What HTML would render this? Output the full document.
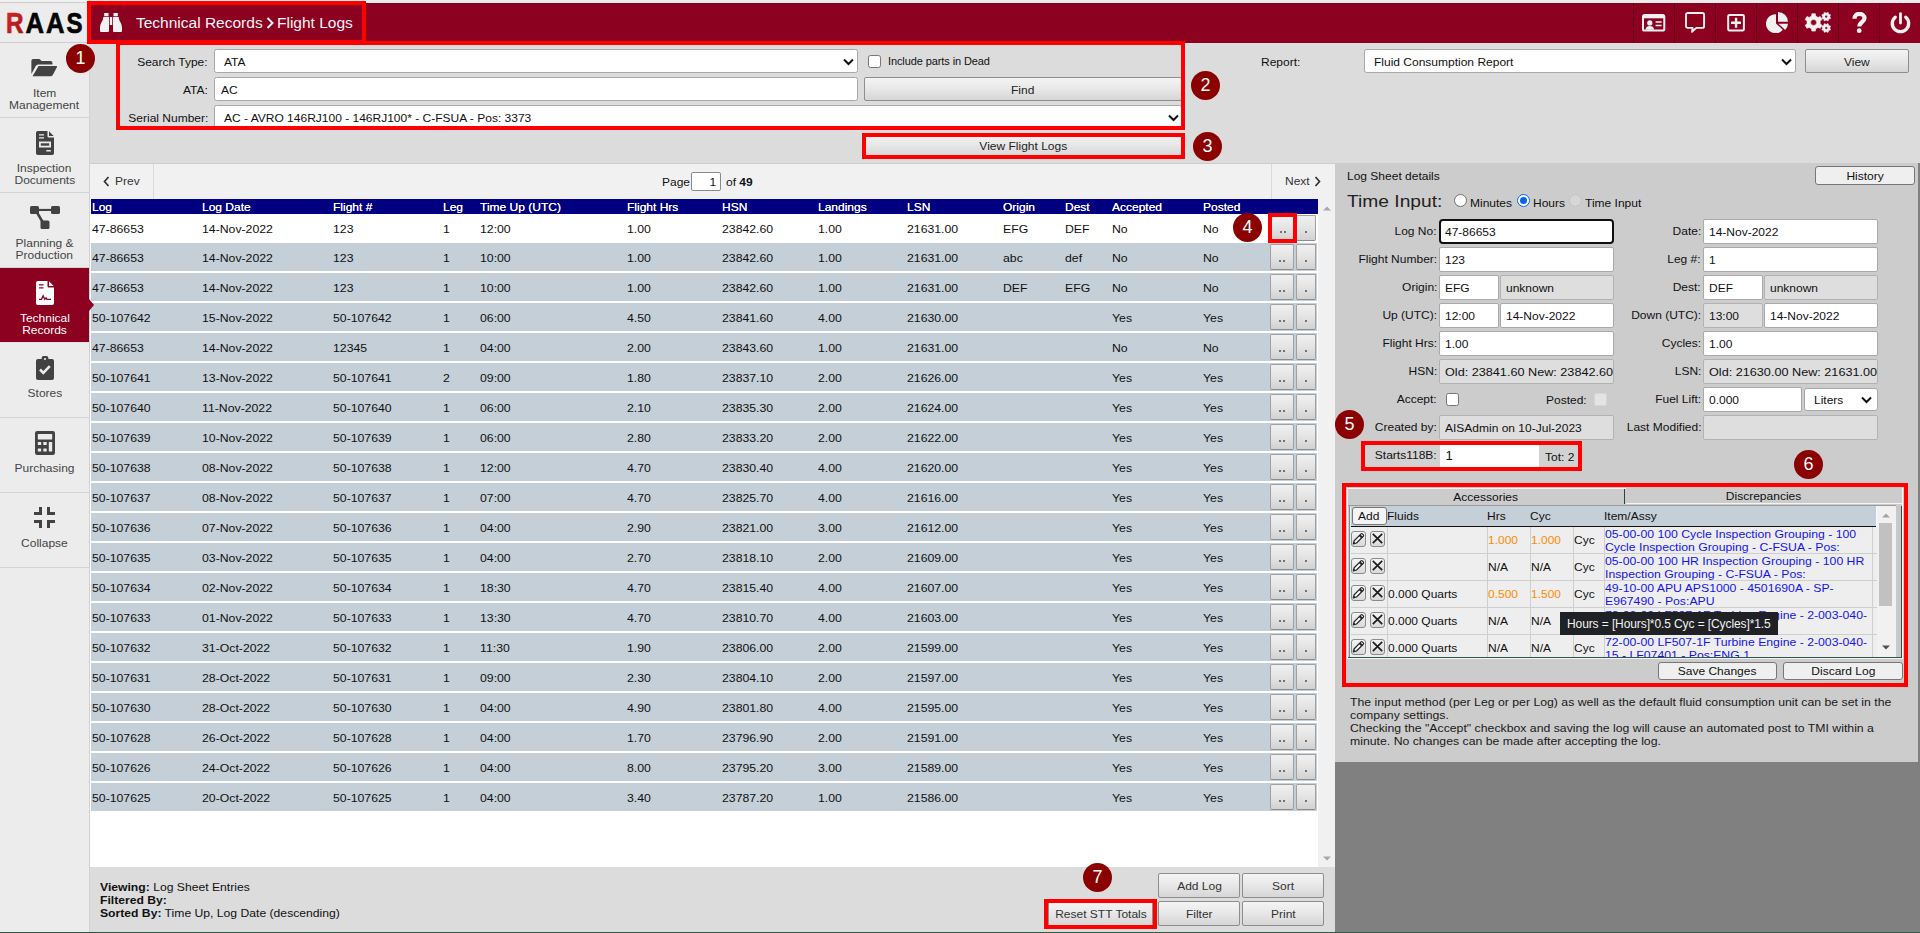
<!DOCTYPE html><html><head><meta charset="utf-8"><title>RAAS - Flight Logs</title><style>
*{box-sizing:border-box;margin:0;padding:0}
html,body{width:1920px;height:933px;overflow:hidden}
body{position:relative;background:#dcdcdc;font-family:"Liberation Sans",sans-serif;font-size:11px;color:#111;line-height:14px}
.sx{display:inline-block;transform:scaleX(1.0909);transform-origin:0 50%;white-space:nowrap}
.sx.sr{transform-origin:100% 50%}
.sx.sc{transform-origin:50% 50%}
.a{position:absolute}
.t{position:absolute;white-space:nowrap}
.r{text-align:right}
.c{text-align:center}
#side{left:0;top:0;width:90px;height:932px;background:#ececec;border-right:1px solid #d2d2d2}
.si{position:absolute;left:0;width:89px;height:75px;border-bottom:1px solid #d4d4d4;color:#454545;text-align:center;line-height:12px}
.si .lb{position:absolute;left:0;width:89px;text-align:center}
.si.act{background:#8c0020;color:#fff;border-bottom-color:#e2e2e2}
#hdr{left:90px;top:3px;width:1830px;height:40px;background:#8c0020}
.hsep{position:absolute;top:0;width:1px;height:40px;background:#64001a}
.redbox{position:absolute;border:4px solid #fe0000}
.circ{position:absolute;width:29px;height:29px;border-radius:50%;background:#8b0000;color:#fff;text-align:center;font-size:18px;line-height:29px}
.sel,.inp{position:absolute;background:#fff;border:1px solid #a8a8a8;border-radius:2.500px;height:24px;line-height:25.500px;padding-left:9px;white-space:nowrap;overflow:hidden}
.gbtn{position:absolute;border:1px solid #8e8e8e;border-radius:2px;background:linear-gradient(#f4f4f4,#e9e9e9 45%,#d6d6d6);text-align:center;color:#222;white-space:nowrap}
.row{position:absolute;left:91px;width:1226px;height:28px;background:#c4cfd8;line-height:28px}
.row>span{position:absolute;top:0.500px;white-space:nowrap}
.rb{position:absolute;top:1px;height:26px;border:1px solid #a0a0a0;border-bottom-color:#8c8c8c;border-radius:2px;background:linear-gradient(#f0f0f0,#e4e4e4 50%,#d2d2d2);}
.rb i{position:absolute;width:2px;height:2px;background:#727272;top:15px}
.fi{position:absolute;height:25px;background:#fff;border:1px solid #a9a9a9;border-radius:2px;line-height:25.500px;padding-left:5px;white-space:nowrap;overflow:hidden}
.fi.d{background:#dedede;border-color:#b2b2b2}
.fl{position:absolute;text-align:right;white-space:nowrap;line-height:24px;height:24px}
.pb{position:absolute;border:1px solid #767676;border-radius:3px;background:#efefef;text-align:center;white-space:nowrap}
.gr{position:absolute;left:1351px;width:526px;height:27px;background:#eeeeee;border-bottom:1px solid #cfcfcf}
.gr .vb{position:absolute;top:0;width:1px;height:27px;background:#cfcfcf}
.gr>span{position:absolute;white-space:nowrap}
.lnk{color:#1414ee;line-height:13px}
.ib{position:absolute;width:15px;height:15.500px;border:1px solid #8a8a8a;border-radius:3px;background:linear-gradient(#f4f4f4,#d9d9d9)}
</style></head><body>
<div class="a" style="left:0;top:0;width:1920px;height:3px;background:#ededed"></div>
<div id="side" class="a">
<div class="a" style="left:0;top:42px;width:89px;height:1px;background:#cfcfcf"></div>
<svg class="a" style="left:0;top:3px" width="89" height="39" viewBox="0 0 89 39"><defs><linearGradient id="rg" x1="0" y1="0" x2="1" y2="1"><stop offset="0" stop-color="#e02828"/><stop offset="1" stop-color="#9a1414"/></linearGradient></defs><g font-family="Liberation Sans" font-weight="bold" font-size="30" stroke-width="0.7"><text x="6" y="30" fill="url(#rg)" stroke="url(#rg)" textLength="17.5" lengthAdjust="spacingAndGlyphs">R</text><text x="25.5" y="30" fill="#050505" stroke="#050505" textLength="18.5" lengthAdjust="spacingAndGlyphs">A</text><text x="46" y="30" fill="#050505" stroke="#050505" textLength="18.5" lengthAdjust="spacingAndGlyphs">A</text><text x="66.5" y="30" fill="#050505" stroke="#050505" textLength="16" lengthAdjust="spacingAndGlyphs">S</text></g></svg>
<div class="si" style="top:43px"><svg class="a" style="left:31px;top:16px" width="26" height="17.500" viewBox="0 0 27 19" preserveAspectRatio="none"><path fill="#424242" d="M2.2 0h6.6l2.2 2.3h9.3a2 2 0 0 1 2 2V6H7.6a3 3 0 0 0-2.7 1.700L0.400 16.200V2a2 2 0 0 1 1.800-2z"/><path fill="#424242" d="M7.900 7.600h18.200a.9.9 0 0 1 .8 1.300l-4.300 8.600a2 2 0 0 1-1.800 1.100H1.600z"/></svg>
<div class="lb" style="top:43.500px"><span class="sx sc">Item</span></div><div class="lb" style="top:55.500px"><span class="sx sc">Management</span></div>
</div>
<div class="si" style="top:118px"><svg class="a" style="left:35.500px;top:13px" width="18" height="24" viewBox="0 0 18 24"><path fill="#424242" d="M1.800 0h9.700v5.200a1.300 1.300 0 0 0 1.300 1.300H18v15.700A1.800 1.800 0 0 1 16.200 24H1.800A1.800 1.800 0 0 1 0 22.200V1.800A1.800 1.800 0 0 1 1.800 0z M13 0.300 17.700 5H13z"/><path fill="#ececec" d="M3 3.300h5v1.300H3z M3 6.300h5v1.300H3z M3 10.500h12v6H3z M10.300 19h4.500v1.500h-4.500z"/><path fill="#424242" d="M4.800 12.300h8.400v2.400H4.800z"/></svg>
<div class="lb" style="top:43.500px"><span class="sx sc">Inspection</span></div><div class="lb" style="top:55.500px"><span class="sx sc">Documents</span></div>
</div>
<div class="si" style="top:193px"><svg class="a" style="left:30px;top:12px" width="30" height="25" viewBox="0 0 30 25"><g fill="#424242"><rect x="0" y="1" width="9" height="8" rx="1.600"/><rect x="21" y="1" width="9" height="8" rx="1.600"/><rect x="10.500" y="15.500" width="9" height="8.500" rx="1.600"/><rect x="8" y="3.900" width="14" height="2.100"/><path d="M6 8.200 8.300 7l5.200 9-2.300 1.300z"/></g></svg>
<div class="lb" style="top:43.500px"><span class="sx sc">Planning &amp;</span></div><div class="lb" style="top:55.500px"><span class="sx sc">Production</span></div>
</div>
<div class="si act" style="top:268px"><svg class="a" style="left:35.500px;top:13px" width="18" height="24" viewBox="0 0 18 24"><path fill="#fff" d="M1.800 0h9.700v5.200a1.300 1.300 0 0 0 1.300 1.300H18v15.700A1.800 1.800 0 0 1 16.200 24H1.800A1.800 1.800 0 0 1 0 22.200V1.800A1.800 1.800 0 0 1 1.800 0z M13 0.300 17.700 5H13z"/><path fill="#8c0020" d="M3 3.300h4.500v1.300H3z M3 6.300h4.500v1.300H3z"/><path fill="none" stroke="#8c0020" stroke-width="1.300" d="M3 18.300h2.500l1.600-3.500 1.700 3.500 1.200-1.500 1 1.500h4"/></svg>
<div class="lb" style="top:43.500px"><span class="sx sc">Technical</span></div><div class="lb" style="top:55.500px"><span class="sx sc">Records</span></div>
</div>
<div class="si" style="top:343px"><svg class="a" style="left:35.500px;top:13px" width="18" height="24" viewBox="0 0 18 24"><path fill="#424242" d="M2 3h3.500a3.500 3.500 0 0 1 7 0H16a2 2 0 0 1 2 2v17a2 2 0 0 1-2 2H2a2 2 0 0 1-2-2V5a2 2 0 0 1 2-2z"/><circle cx="9" cy="3" r="1.100" fill="#ececec"/><path fill="none" stroke="#ececec" stroke-width="2.600" d="M4 13.500l3.300 3.300 6.500-6.600"/></svg>
<div class="lb" style="top:43.500px"><span class="sx sc">Stores</span></div>
</div>
<div class="si" style="top:418px"><svg class="a" style="left:34.500px;top:13px" width="20" height="24" viewBox="0 0 20 24"><rect x="0" y="0" width="20" height="24" rx="2.200" fill="#424242"/><g fill="#ececec"><rect x="2.800" y="3" width="14.400" height="5.500" rx=".6"/><rect x="2.800" y="11" width="3.400" height="3" rx=".5"/><rect x="8.300" y="11" width="3.400" height="3" rx=".5"/><rect x="13.800" y="11" width="3.400" height="9.500" rx=".5"/><rect x="2.800" y="17.500" width="3.400" height="3" rx=".5"/><rect x="8.300" y="17.500" width="3.400" height="3" rx=".5"/></g></svg>
<div class="lb" style="top:43.500px"><span class="sx sc">Purchasing</span></div>
</div>
<div class="si" style="top:493px"><svg class="a" style="left:34px;top:14px" width="21" height="21" viewBox="0 0 21 21"><g fill="none" stroke="#424242" stroke-width="3"><path d="M0 6.500h6.500V0"/><path d="M21 6.500h-6.500V0"/><path d="M0 14.500h6.500v6.500"/><path d="M21 14.500h-6.500v6.500"/></g></svg>
<div class="lb" style="top:43.500px"><span class="sx sc">Collapse</span></div>
</div>
</div>
<div class="a" style="left:0;top:0;width:89px;height:2px;background:#f1f1f1"></div><div class="a" style="left:0;top:2px;width:87px;height:1px;background:#cbcbcb"></div>
<div id="hdr" class="a">
<svg class="a" style="left:10px;top:10px" width="22" height="19" viewBox="0 0 22 19"><path fill="#f2f2f2" d="M4.200 0h4.300v3.200H4.200z M13.500 0h4.300v3.200h-4.300z M3.300 4h5.700v14a1 1 0 0 1-1 1H1a1 1 0 0 1-1-1v-3.500C0 10 3.300 8 3.300 4z M13 4h5.700c0 4 3.300 6 3.300 10.500V18a1 1 0 0 1-1 1h-7a1 1 0 0 1-1-1z M9.800 4h2.400v8H9.800z"/></svg>
<div class="t" style="left:46px;top:11px;font-size:15.500px;line-height:18px;color:#f4f4f4">Technical Records</div>
<svg class="a" style="left:176px;top:14px" width="8" height="12" viewBox="0 0 8 12"><path d="M1.500 1l5 5-5 5" fill="none" stroke="#f4f4f4" stroke-width="2"/></svg>
<div class="t" style="left:187px;top:11px;font-size:15.500px;line-height:18px;color:#f4f4f4">Flight Logs</div>
<div class="hsep" style="left:1543px"></div>
<div class="hsep" style="left:1584px"></div>
<div class="hsep" style="left:1625px"></div>
<div class="hsep" style="left:1666px"></div>
<div class="hsep" style="left:1707px"></div>
<div class="hsep" style="left:1748px"></div>
<div class="hsep" style="left:1789px"></div>
<svg class="a" style="left:1552.4px;top:10.700px" width="24" height="18" viewBox="0 0 24 18"><rect x="1" y="1" width="21.300" height="15.500" rx="1.600" fill="none" stroke="#f1f1f1" stroke-width="2"/><rect x="1" y="1" width="21.300" height="3.300" fill="#f1f1f1"/><circle cx="7.800" cy="8.900" r="2.600" fill="#f1f1f1"/><path d="M3.600 15.800c0-2.800 1.800-3.800 4.200-3.800s4.200 1 4.200 3.800z" fill="#f1f1f1"/><path d="M13.600 8h6M13.600 11.500h6" stroke="#f1f1f1" stroke-width="1.500"/></svg>
<svg class="a" style="left:1595px;top:9px" width="21" height="21" viewBox="0 0 21 21"><path d="M2.700 1h14.700a1.700 1.700 0 0 1 1.700 1.700v11.500a1.700 1.700 0 0 1-1.700 1.700H11.300l-4.300 3.900 .6-3.900H2.700a1.700 1.700 0 0 1-1.700-1.700V2.700a1.700 1.700 0 0 1 1.700-1.700z" fill="none" stroke="#f1f1f1" stroke-width="1.900" stroke-linejoin="round"/></svg>
<svg class="a" style="left:1637px;top:10.700px" width="19" height="18" viewBox="0 0 19 18"><rect x="1.200" y="1" width="15.700" height="15.500" rx="1.300" fill="none" stroke="#f1f1f1" stroke-width="2"/><path d="M9.050 3.800v10M4 8.800h10" stroke="#f1f1f1" stroke-width="2.400"/></svg>
<svg class="a" style="left:1676px;top:9px" width="23" height="21" viewBox="0 0 23 21"><path d="M10 2.300v9.200l6.800 6.300A9.500 9.500 0 1 1 10 2.300z" fill="#f1f1f1"/><path d="M12 0a10 10 0 0 1 10 9.800H12z" fill="#f1f1f1"/><path d="M12.500 11.800H22a9.500 9.500 0 0 1-2.800 6.200z" fill="#f1f1f1"/></svg>
<svg class="a" style="left:1714px;top:9px" width="28" height="22" viewBox="0 0 28 22"><path fill="#f1f1f1" fill-rule="evenodd" stroke="#f1f1f1" stroke-width="0.6" stroke-linejoin="round" d="M16.15 11.79 L18.04 13.24 L16.28 16.29 L14.08 15.38 L11.67 16.77 L11.36 19.12 L7.84 19.12 L7.53 16.77 L5.12 15.38 L2.92 16.29 L1.16 13.24 L3.05 11.79 L3.05 9.01 L1.16 7.56 L2.92 4.51 L5.12 5.42 L7.53 4.03 L7.84 1.68 L11.36 1.68 L11.67 4.03 L14.08 5.42 L16.28 4.51 L18.04 7.56 L16.15 9.01z M6.60 10.40 a3.00 3.00 0 1 0 6.00 0 a3.00 3.00 0 1 0 -6.00 0z"/><path fill="#f1f1f1" fill-rule="evenodd" stroke="#f1f1f1" stroke-width="0.4" stroke-linejoin="round" d="M25.90 5.19 L26.66 5.71 L26.14 6.97 L25.23 6.80 L24.40 7.63 L24.57 8.54 L23.31 9.06 L22.79 8.30 L21.61 8.30 L21.09 9.06 L19.83 8.54 L20.00 7.63 L19.17 6.80 L18.26 6.97 L17.74 5.71 L18.50 5.19 L18.50 4.01 L17.74 3.49 L18.26 2.23 L19.17 2.40 L20.00 1.57 L19.83 0.66 L21.09 0.14 L21.61 0.90 L22.79 0.90 L23.31 0.14 L24.57 0.66 L24.40 1.57 L25.23 2.40 L26.14 2.23 L26.66 3.49 L25.90 4.01z M20.90 4.60 a1.30 1.30 0 1 0 2.60 0 a1.30 1.30 0 1 0 -2.60 0z"/><path fill="#f1f1f1" fill-rule="evenodd" stroke="#f1f1f1" stroke-width="0.4" stroke-linejoin="round" d="M25.90 16.59 L26.66 17.11 L26.14 18.37 L25.23 18.20 L24.40 19.03 L24.57 19.94 L23.31 20.46 L22.79 19.70 L21.61 19.70 L21.09 20.46 L19.83 19.94 L20.00 19.03 L19.17 18.20 L18.26 18.37 L17.74 17.11 L18.50 16.59 L18.50 15.41 L17.74 14.89 L18.26 13.63 L19.17 13.80 L20.00 12.97 L19.83 12.06 L21.09 11.54 L21.61 12.30 L22.79 12.30 L23.31 11.54 L24.57 12.06 L24.40 12.97 L25.23 13.80 L26.14 13.63 L26.66 14.89 L25.90 15.41z M20.90 16.00 a1.30 1.30 0 1 0 2.60 0 a1.30 1.30 0 1 0 -2.60 0z"/></svg>
<svg class="a" style="left:1761px;top:9px" width="17" height="22" viewBox="0 0 17 22"><path d="M3.500 6.800C3.500 3.200 5.800 1.900 8.300 1.900C11.200 1.900 13.500 3.600 13.500 6.300C13.500 9.800 8.300 9.900 8.300 14.600" fill="none" stroke="#f1f1f1" stroke-width="4.200"/><circle cx="8.200" cy="18.700" r="2.400" fill="#f1f1f1"/></svg>
<svg class="a" style="left:1800px;top:9px" width="21" height="22" viewBox="0 0 21 22"><path d="M5.200 5.200A8.200 8.200 0 1 0 15.800 5.200" fill="none" stroke="#f1f1f1" stroke-width="3.400" stroke-linecap="round"/><path d="M10.500 1.700v9.300" stroke="#f1f1f1" stroke-width="2.800" stroke-linecap="round"/></svg>
</div>
<div class="t r" style="left:100px;top:55px;width:108px"><span class="sx sr">Search Type:</span></div>
<div class="t r" style="left:100px;top:83px;width:108px"><span class="sx sr">ATA:</span></div>
<div class="t r" style="left:100px;top:111px;width:108px"><span class="sx sr">Serial Number:</span></div>
<div class="sel" style="left:214px;top:49px;width:644px"><span class="sx">ATA</span></div><svg class="a" style="left:843px;top:58px" width="11" height="8" viewBox="0 0 11 8"><path d="M1 1.500l4.500 4.500L10 1.500" fill="none" stroke="#111" stroke-width="2"/></svg>
<div class="inp" style="left:214px;top:77px;width:644px;padding-left:6px"><span class="sx">AC</span></div>
<div class="sel" style="left:214px;top:105px;width:968px"><span class="sx">AC - AVRO 146RJ100 - 146RJ100* - C-FSUA - Pos: 3373</span></div><svg class="a" style="left:1168px;top:114px" width="11" height="8" viewBox="0 0 11 8"><path d="M1 1.500l4.500 4.500L10 1.500" fill="none" stroke="#111" stroke-width="2"/></svg>
<div class="a" style="left:868px;top:55px;width:13px;height:13px;background:#fff;border:1px solid #767676;border-radius:2.500px"></div>
<div class="t" style="left:888px;top:54px;font-size:11px;letter-spacing:-0.100px">Include parts in Dead</div>
<div class="gbtn" style="left:864px;top:77px;width:318px;height:24px;line-height:24px"><span class="sx sc">Find</span></div>
<div class="gbtn" style="left:864px;top:133px;width:318px;height:24px;line-height:24px"><span class="sx sc">View Flight Logs</span></div>
<div class="t" style="left:1261px;top:55px"><span class="sx">Report:</span></div>
<div class="sel" style="left:1364px;top:49px;width:432px"><span class="sx">Fluid Consumption Report</span></div><svg class="a" style="left:1781px;top:58px" width="11" height="8" viewBox="0 0 11 8"><path d="M1 1.500l4.500 4.500L10 1.500" fill="none" stroke="#111" stroke-width="2"/></svg>
<div class="gbtn" style="left:1805px;top:49px;width:104px;height:24px;line-height:24px"><span class="sx sc">View</span></div>
<div class="a" style="left:90px;top:163px;width:1245px;height:36px;background:#f1f1f1;border-top:1px solid #cdcdcd"></div>
<div class="a" style="left:153px;top:164px;width:1px;height:35px;background:#dadada"></div>
<div class="a" style="left:1271px;top:164px;width:1px;height:35px;background:#dadada"></div>
<svg class="a" style="left:103px;top:176px" width="7" height="11" viewBox="0 0 7 11"><path d="M5.500 1L1.500 5.500 5.500 10" fill="none" stroke="#333" stroke-width="1.700"/></svg>
<div class="t" style="left:115px;top:173.500px;color:#333"><span class="sx">Prev</span></div>
<div class="t" style="left:1285px;top:173.500px;color:#333"><span class="sx">Next</span></div>
<svg class="a" style="left:1314px;top:176px" width="7" height="11" viewBox="0 0 7 11"><path d="M1.500 1L5.500 5.500 1.500 10" fill="none" stroke="#333" stroke-width="1.700"/></svg>
<div class="t" style="left:662px;top:174.500px"><span class="sx">Page</span></div>
<div class="a r" style="left:691px;top:172px;width:30px;height:19px;background:#fff;border:1px solid #8a8a8a;border-radius:2px;line-height:19.500px;padding-right:3.500px"><span class="sx sr">1</span></div>
<div class="t" style="left:726px;top:174.500px"><span class="sx">of <b>49</b></span></div>
<div class="a" style="left:90px;top:199px;width:1228px;height:668px;background:#fff"></div>
<div class="a" style="left:1318px;top:199px;width:17px;height:668px;background:#f1f1f1"></div>
<svg class="a" style="left:1322.500px;top:205.500px" width="8" height="5" viewBox="0 0 8 5"><path d="M0 4.500L4 0.500 8 4.500z" fill="#a8a8a8"/></svg>
<svg class="a" style="left:1322.500px;top:855.500px" width="8" height="5" viewBox="0 0 8 5"><path d="M0 0.500L4 4.500 8 0.500z" fill="#a8a8a8"/></svg>
<div class="a" style="left:91px;top:199px;width:1227px;height:15px;background:#000080;color:#fff;line-height:15px">
<span class="t" style="left:0.5px;top:0.500px;text-shadow:0 0 0.400px #fff"><span class="sx">Log</span></span>
<span class="t" style="left:111.0px;top:0.500px;text-shadow:0 0 0.400px #fff"><span class="sx">Log Date</span></span>
<span class="t" style="left:242.3px;top:0.500px;text-shadow:0 0 0.400px #fff"><span class="sx">Flight #</span></span>
<span class="t" style="left:351.5px;top:0.500px;text-shadow:0 0 0.400px #fff"><span class="sx">Leg</span></span>
<span class="t" style="left:389.3px;top:0.500px;text-shadow:0 0 0.400px #fff"><span class="sx">Time Up (UTC)</span></span>
<span class="t" style="left:535.5px;top:0.500px;text-shadow:0 0 0.400px #fff"><span class="sx">Flight Hrs</span></span>
<span class="t" style="left:631.0px;top:0.500px;text-shadow:0 0 0.400px #fff"><span class="sx">HSN</span></span>
<span class="t" style="left:727.3px;top:0.500px;text-shadow:0 0 0.400px #fff"><span class="sx">Landings</span></span>
<span class="t" style="left:816.0px;top:0.500px;text-shadow:0 0 0.400px #fff"><span class="sx">LSN</span></span>
<span class="t" style="left:912.3px;top:0.500px;text-shadow:0 0 0.400px #fff"><span class="sx">Origin</span></span>
<span class="t" style="left:973.5px;top:0.500px;text-shadow:0 0 0.400px #fff"><span class="sx">Dest</span></span>
<span class="t" style="left:1021.0px;top:0.500px;text-shadow:0 0 0.400px #fff"><span class="sx">Accepted</span></span>
<span class="t" style="left:1111.8px;top:0.500px;text-shadow:0 0 0.400px #fff"><span class="sx">Posted</span></span>
</div>
<div class="row" style="top:214px;background:#fff;height:29px">
<span style="left:0.5px"><span class="sx" style="transform:scaleX(1.115)">47-86653</span></span>
<span style="left:111.0px"><span class="sx" style="transform:scaleX(1.115)">14-Nov-2022</span></span>
<span style="left:242.3px"><span class="sx" style="transform:scaleX(1.115)">123</span></span>
<span style="left:351.5px"><span class="sx" style="transform:scaleX(1.115)">1</span></span>
<span style="left:389.3px"><span class="sx" style="transform:scaleX(1.115)">12:00</span></span>
<span style="left:535.5px"><span class="sx" style="transform:scaleX(1.115)">1.00</span></span>
<span style="left:631.0px"><span class="sx" style="transform:scaleX(1.115)">23842.60</span></span>
<span style="left:727.3px"><span class="sx" style="transform:scaleX(1.115)">1.00</span></span>
<span style="left:816.0px"><span class="sx" style="transform:scaleX(1.115)">21631.00</span></span>
<span style="left:912.3px"><span class="sx" style="transform:scaleX(1.115)">EFG</span></span>
<span style="left:973.5px"><span class="sx" style="transform:scaleX(1.115)">DEF</span></span>
<span style="left:1021.0px"><span class="sx" style="transform:scaleX(1.115)">No</span></span>
<span style="left:1111.8px"><span class="sx" style="transform:scaleX(1.115)">No</span></span>
<div class="rb" style="left:1180px;top:2px;width:23px;height:24px;border-radius:0"><i style="left:8px;top:14px"></i><i style="left:12px;top:14px"></i></div>
<div class="rb" style="left:1205px;top:1px;width:20px;height:25.500px"><i style="left:8px;top:15px"></i></div>
</div>
<div class="row" style="top:243px;">
<span style="left:0.5px"><span class="sx" style="transform:scaleX(1.115)">47-86653</span></span>
<span style="left:111.0px"><span class="sx" style="transform:scaleX(1.115)">14-Nov-2022</span></span>
<span style="left:242.3px"><span class="sx" style="transform:scaleX(1.115)">123</span></span>
<span style="left:351.5px"><span class="sx" style="transform:scaleX(1.115)">1</span></span>
<span style="left:389.3px"><span class="sx" style="transform:scaleX(1.115)">10:00</span></span>
<span style="left:535.5px"><span class="sx" style="transform:scaleX(1.115)">1.00</span></span>
<span style="left:631.0px"><span class="sx" style="transform:scaleX(1.115)">23842.60</span></span>
<span style="left:727.3px"><span class="sx" style="transform:scaleX(1.115)">1.00</span></span>
<span style="left:816.0px"><span class="sx" style="transform:scaleX(1.115)">21631.00</span></span>
<span style="left:912.3px"><span class="sx" style="transform:scaleX(1.115)">abc</span></span>
<span style="left:973.5px"><span class="sx" style="transform:scaleX(1.115)">def</span></span>
<span style="left:1021.0px"><span class="sx" style="transform:scaleX(1.115)">No</span></span>
<span style="left:1111.8px"><span class="sx" style="transform:scaleX(1.115)">No</span></span>
<div class="rb" style="left:1179px;width:24px"><i style="left:8px"></i><i style="left:12px"></i></div>
<div class="rb" style="left:1205px;width:20px"><i style="left:8px"></i></div>
</div>
<div class="row" style="top:273px;">
<span style="left:0.5px"><span class="sx" style="transform:scaleX(1.115)">47-86653</span></span>
<span style="left:111.0px"><span class="sx" style="transform:scaleX(1.115)">14-Nov-2022</span></span>
<span style="left:242.3px"><span class="sx" style="transform:scaleX(1.115)">123</span></span>
<span style="left:351.5px"><span class="sx" style="transform:scaleX(1.115)">1</span></span>
<span style="left:389.3px"><span class="sx" style="transform:scaleX(1.115)">10:00</span></span>
<span style="left:535.5px"><span class="sx" style="transform:scaleX(1.115)">1.00</span></span>
<span style="left:631.0px"><span class="sx" style="transform:scaleX(1.115)">23842.60</span></span>
<span style="left:727.3px"><span class="sx" style="transform:scaleX(1.115)">1.00</span></span>
<span style="left:816.0px"><span class="sx" style="transform:scaleX(1.115)">21631.00</span></span>
<span style="left:912.3px"><span class="sx" style="transform:scaleX(1.115)">DEF</span></span>
<span style="left:973.5px"><span class="sx" style="transform:scaleX(1.115)">EFG</span></span>
<span style="left:1021.0px"><span class="sx" style="transform:scaleX(1.115)">No</span></span>
<span style="left:1111.8px"><span class="sx" style="transform:scaleX(1.115)">No</span></span>
<div class="rb" style="left:1179px;width:24px"><i style="left:8px"></i><i style="left:12px"></i></div>
<div class="rb" style="left:1205px;width:20px"><i style="left:8px"></i></div>
</div>
<div class="row" style="top:303px;">
<span style="left:0.5px"><span class="sx" style="transform:scaleX(1.115)">50-107642</span></span>
<span style="left:111.0px"><span class="sx" style="transform:scaleX(1.115)">15-Nov-2022</span></span>
<span style="left:242.3px"><span class="sx" style="transform:scaleX(1.115)">50-107642</span></span>
<span style="left:351.5px"><span class="sx" style="transform:scaleX(1.115)">1</span></span>
<span style="left:389.3px"><span class="sx" style="transform:scaleX(1.115)">06:00</span></span>
<span style="left:535.5px"><span class="sx" style="transform:scaleX(1.115)">4.50</span></span>
<span style="left:631.0px"><span class="sx" style="transform:scaleX(1.115)">23841.60</span></span>
<span style="left:727.3px"><span class="sx" style="transform:scaleX(1.115)">4.00</span></span>
<span style="left:816.0px"><span class="sx" style="transform:scaleX(1.115)">21630.00</span></span>
<span style="left:1021.0px"><span class="sx" style="transform:scaleX(1.115)">Yes</span></span>
<span style="left:1111.8px"><span class="sx" style="transform:scaleX(1.115)">Yes</span></span>
<div class="rb" style="left:1179px;width:24px"><i style="left:8px"></i><i style="left:12px"></i></div>
<div class="rb" style="left:1205px;width:20px"><i style="left:8px"></i></div>
</div>
<div class="row" style="top:333px;">
<span style="left:0.5px"><span class="sx" style="transform:scaleX(1.115)">47-86653</span></span>
<span style="left:111.0px"><span class="sx" style="transform:scaleX(1.115)">14-Nov-2022</span></span>
<span style="left:242.3px"><span class="sx" style="transform:scaleX(1.115)">12345</span></span>
<span style="left:351.5px"><span class="sx" style="transform:scaleX(1.115)">1</span></span>
<span style="left:389.3px"><span class="sx" style="transform:scaleX(1.115)">04:00</span></span>
<span style="left:535.5px"><span class="sx" style="transform:scaleX(1.115)">2.00</span></span>
<span style="left:631.0px"><span class="sx" style="transform:scaleX(1.115)">23843.60</span></span>
<span style="left:727.3px"><span class="sx" style="transform:scaleX(1.115)">1.00</span></span>
<span style="left:816.0px"><span class="sx" style="transform:scaleX(1.115)">21631.00</span></span>
<span style="left:1021.0px"><span class="sx" style="transform:scaleX(1.115)">No</span></span>
<span style="left:1111.8px"><span class="sx" style="transform:scaleX(1.115)">No</span></span>
<div class="rb" style="left:1179px;width:24px"><i style="left:8px"></i><i style="left:12px"></i></div>
<div class="rb" style="left:1205px;width:20px"><i style="left:8px"></i></div>
</div>
<div class="row" style="top:363px;">
<span style="left:0.5px"><span class="sx" style="transform:scaleX(1.115)">50-107641</span></span>
<span style="left:111.0px"><span class="sx" style="transform:scaleX(1.115)">13-Nov-2022</span></span>
<span style="left:242.3px"><span class="sx" style="transform:scaleX(1.115)">50-107641</span></span>
<span style="left:351.5px"><span class="sx" style="transform:scaleX(1.115)">2</span></span>
<span style="left:389.3px"><span class="sx" style="transform:scaleX(1.115)">09:00</span></span>
<span style="left:535.5px"><span class="sx" style="transform:scaleX(1.115)">1.80</span></span>
<span style="left:631.0px"><span class="sx" style="transform:scaleX(1.115)">23837.10</span></span>
<span style="left:727.3px"><span class="sx" style="transform:scaleX(1.115)">2.00</span></span>
<span style="left:816.0px"><span class="sx" style="transform:scaleX(1.115)">21626.00</span></span>
<span style="left:1021.0px"><span class="sx" style="transform:scaleX(1.115)">Yes</span></span>
<span style="left:1111.8px"><span class="sx" style="transform:scaleX(1.115)">Yes</span></span>
<div class="rb" style="left:1179px;width:24px"><i style="left:8px"></i><i style="left:12px"></i></div>
<div class="rb" style="left:1205px;width:20px"><i style="left:8px"></i></div>
</div>
<div class="row" style="top:393px;">
<span style="left:0.5px"><span class="sx" style="transform:scaleX(1.115)">50-107640</span></span>
<span style="left:111.0px"><span class="sx" style="transform:scaleX(1.115)">11-Nov-2022</span></span>
<span style="left:242.3px"><span class="sx" style="transform:scaleX(1.115)">50-107640</span></span>
<span style="left:351.5px"><span class="sx" style="transform:scaleX(1.115)">1</span></span>
<span style="left:389.3px"><span class="sx" style="transform:scaleX(1.115)">06:00</span></span>
<span style="left:535.5px"><span class="sx" style="transform:scaleX(1.115)">2.10</span></span>
<span style="left:631.0px"><span class="sx" style="transform:scaleX(1.115)">23835.30</span></span>
<span style="left:727.3px"><span class="sx" style="transform:scaleX(1.115)">2.00</span></span>
<span style="left:816.0px"><span class="sx" style="transform:scaleX(1.115)">21624.00</span></span>
<span style="left:1021.0px"><span class="sx" style="transform:scaleX(1.115)">Yes</span></span>
<span style="left:1111.8px"><span class="sx" style="transform:scaleX(1.115)">Yes</span></span>
<div class="rb" style="left:1179px;width:24px"><i style="left:8px"></i><i style="left:12px"></i></div>
<div class="rb" style="left:1205px;width:20px"><i style="left:8px"></i></div>
</div>
<div class="row" style="top:423px;">
<span style="left:0.5px"><span class="sx" style="transform:scaleX(1.115)">50-107639</span></span>
<span style="left:111.0px"><span class="sx" style="transform:scaleX(1.115)">10-Nov-2022</span></span>
<span style="left:242.3px"><span class="sx" style="transform:scaleX(1.115)">50-107639</span></span>
<span style="left:351.5px"><span class="sx" style="transform:scaleX(1.115)">1</span></span>
<span style="left:389.3px"><span class="sx" style="transform:scaleX(1.115)">06:00</span></span>
<span style="left:535.5px"><span class="sx" style="transform:scaleX(1.115)">2.80</span></span>
<span style="left:631.0px"><span class="sx" style="transform:scaleX(1.115)">23833.20</span></span>
<span style="left:727.3px"><span class="sx" style="transform:scaleX(1.115)">2.00</span></span>
<span style="left:816.0px"><span class="sx" style="transform:scaleX(1.115)">21622.00</span></span>
<span style="left:1021.0px"><span class="sx" style="transform:scaleX(1.115)">Yes</span></span>
<span style="left:1111.8px"><span class="sx" style="transform:scaleX(1.115)">Yes</span></span>
<div class="rb" style="left:1179px;width:24px"><i style="left:8px"></i><i style="left:12px"></i></div>
<div class="rb" style="left:1205px;width:20px"><i style="left:8px"></i></div>
</div>
<div class="row" style="top:453px;">
<span style="left:0.5px"><span class="sx" style="transform:scaleX(1.115)">50-107638</span></span>
<span style="left:111.0px"><span class="sx" style="transform:scaleX(1.115)">08-Nov-2022</span></span>
<span style="left:242.3px"><span class="sx" style="transform:scaleX(1.115)">50-107638</span></span>
<span style="left:351.5px"><span class="sx" style="transform:scaleX(1.115)">1</span></span>
<span style="left:389.3px"><span class="sx" style="transform:scaleX(1.115)">12:00</span></span>
<span style="left:535.5px"><span class="sx" style="transform:scaleX(1.115)">4.70</span></span>
<span style="left:631.0px"><span class="sx" style="transform:scaleX(1.115)">23830.40</span></span>
<span style="left:727.3px"><span class="sx" style="transform:scaleX(1.115)">4.00</span></span>
<span style="left:816.0px"><span class="sx" style="transform:scaleX(1.115)">21620.00</span></span>
<span style="left:1021.0px"><span class="sx" style="transform:scaleX(1.115)">Yes</span></span>
<span style="left:1111.8px"><span class="sx" style="transform:scaleX(1.115)">Yes</span></span>
<div class="rb" style="left:1179px;width:24px"><i style="left:8px"></i><i style="left:12px"></i></div>
<div class="rb" style="left:1205px;width:20px"><i style="left:8px"></i></div>
</div>
<div class="row" style="top:483px;">
<span style="left:0.5px"><span class="sx" style="transform:scaleX(1.115)">50-107637</span></span>
<span style="left:111.0px"><span class="sx" style="transform:scaleX(1.115)">08-Nov-2022</span></span>
<span style="left:242.3px"><span class="sx" style="transform:scaleX(1.115)">50-107637</span></span>
<span style="left:351.5px"><span class="sx" style="transform:scaleX(1.115)">1</span></span>
<span style="left:389.3px"><span class="sx" style="transform:scaleX(1.115)">07:00</span></span>
<span style="left:535.5px"><span class="sx" style="transform:scaleX(1.115)">4.70</span></span>
<span style="left:631.0px"><span class="sx" style="transform:scaleX(1.115)">23825.70</span></span>
<span style="left:727.3px"><span class="sx" style="transform:scaleX(1.115)">4.00</span></span>
<span style="left:816.0px"><span class="sx" style="transform:scaleX(1.115)">21616.00</span></span>
<span style="left:1021.0px"><span class="sx" style="transform:scaleX(1.115)">Yes</span></span>
<span style="left:1111.8px"><span class="sx" style="transform:scaleX(1.115)">Yes</span></span>
<div class="rb" style="left:1179px;width:24px"><i style="left:8px"></i><i style="left:12px"></i></div>
<div class="rb" style="left:1205px;width:20px"><i style="left:8px"></i></div>
</div>
<div class="row" style="top:513px;">
<span style="left:0.5px"><span class="sx" style="transform:scaleX(1.115)">50-107636</span></span>
<span style="left:111.0px"><span class="sx" style="transform:scaleX(1.115)">07-Nov-2022</span></span>
<span style="left:242.3px"><span class="sx" style="transform:scaleX(1.115)">50-107636</span></span>
<span style="left:351.5px"><span class="sx" style="transform:scaleX(1.115)">1</span></span>
<span style="left:389.3px"><span class="sx" style="transform:scaleX(1.115)">04:00</span></span>
<span style="left:535.5px"><span class="sx" style="transform:scaleX(1.115)">2.90</span></span>
<span style="left:631.0px"><span class="sx" style="transform:scaleX(1.115)">23821.00</span></span>
<span style="left:727.3px"><span class="sx" style="transform:scaleX(1.115)">3.00</span></span>
<span style="left:816.0px"><span class="sx" style="transform:scaleX(1.115)">21612.00</span></span>
<span style="left:1021.0px"><span class="sx" style="transform:scaleX(1.115)">Yes</span></span>
<span style="left:1111.8px"><span class="sx" style="transform:scaleX(1.115)">Yes</span></span>
<div class="rb" style="left:1179px;width:24px"><i style="left:8px"></i><i style="left:12px"></i></div>
<div class="rb" style="left:1205px;width:20px"><i style="left:8px"></i></div>
</div>
<div class="row" style="top:543px;">
<span style="left:0.5px"><span class="sx" style="transform:scaleX(1.115)">50-107635</span></span>
<span style="left:111.0px"><span class="sx" style="transform:scaleX(1.115)">03-Nov-2022</span></span>
<span style="left:242.3px"><span class="sx" style="transform:scaleX(1.115)">50-107635</span></span>
<span style="left:351.5px"><span class="sx" style="transform:scaleX(1.115)">1</span></span>
<span style="left:389.3px"><span class="sx" style="transform:scaleX(1.115)">04:00</span></span>
<span style="left:535.5px"><span class="sx" style="transform:scaleX(1.115)">2.70</span></span>
<span style="left:631.0px"><span class="sx" style="transform:scaleX(1.115)">23818.10</span></span>
<span style="left:727.3px"><span class="sx" style="transform:scaleX(1.115)">2.00</span></span>
<span style="left:816.0px"><span class="sx" style="transform:scaleX(1.115)">21609.00</span></span>
<span style="left:1021.0px"><span class="sx" style="transform:scaleX(1.115)">Yes</span></span>
<span style="left:1111.8px"><span class="sx" style="transform:scaleX(1.115)">Yes</span></span>
<div class="rb" style="left:1179px;width:24px"><i style="left:8px"></i><i style="left:12px"></i></div>
<div class="rb" style="left:1205px;width:20px"><i style="left:8px"></i></div>
</div>
<div class="row" style="top:573px;">
<span style="left:0.5px"><span class="sx" style="transform:scaleX(1.115)">50-107634</span></span>
<span style="left:111.0px"><span class="sx" style="transform:scaleX(1.115)">02-Nov-2022</span></span>
<span style="left:242.3px"><span class="sx" style="transform:scaleX(1.115)">50-107634</span></span>
<span style="left:351.5px"><span class="sx" style="transform:scaleX(1.115)">1</span></span>
<span style="left:389.3px"><span class="sx" style="transform:scaleX(1.115)">18:30</span></span>
<span style="left:535.5px"><span class="sx" style="transform:scaleX(1.115)">4.70</span></span>
<span style="left:631.0px"><span class="sx" style="transform:scaleX(1.115)">23815.40</span></span>
<span style="left:727.3px"><span class="sx" style="transform:scaleX(1.115)">4.00</span></span>
<span style="left:816.0px"><span class="sx" style="transform:scaleX(1.115)">21607.00</span></span>
<span style="left:1021.0px"><span class="sx" style="transform:scaleX(1.115)">Yes</span></span>
<span style="left:1111.8px"><span class="sx" style="transform:scaleX(1.115)">Yes</span></span>
<div class="rb" style="left:1179px;width:24px"><i style="left:8px"></i><i style="left:12px"></i></div>
<div class="rb" style="left:1205px;width:20px"><i style="left:8px"></i></div>
</div>
<div class="row" style="top:603px;">
<span style="left:0.5px"><span class="sx" style="transform:scaleX(1.115)">50-107633</span></span>
<span style="left:111.0px"><span class="sx" style="transform:scaleX(1.115)">01-Nov-2022</span></span>
<span style="left:242.3px"><span class="sx" style="transform:scaleX(1.115)">50-107633</span></span>
<span style="left:351.5px"><span class="sx" style="transform:scaleX(1.115)">1</span></span>
<span style="left:389.3px"><span class="sx" style="transform:scaleX(1.115)">13:30</span></span>
<span style="left:535.5px"><span class="sx" style="transform:scaleX(1.115)">4.70</span></span>
<span style="left:631.0px"><span class="sx" style="transform:scaleX(1.115)">23810.70</span></span>
<span style="left:727.3px"><span class="sx" style="transform:scaleX(1.115)">4.00</span></span>
<span style="left:816.0px"><span class="sx" style="transform:scaleX(1.115)">21603.00</span></span>
<span style="left:1021.0px"><span class="sx" style="transform:scaleX(1.115)">Yes</span></span>
<span style="left:1111.8px"><span class="sx" style="transform:scaleX(1.115)">Yes</span></span>
<div class="rb" style="left:1179px;width:24px"><i style="left:8px"></i><i style="left:12px"></i></div>
<div class="rb" style="left:1205px;width:20px"><i style="left:8px"></i></div>
</div>
<div class="row" style="top:633px;">
<span style="left:0.5px"><span class="sx" style="transform:scaleX(1.115)">50-107632</span></span>
<span style="left:111.0px"><span class="sx" style="transform:scaleX(1.115)">31-Oct-2022</span></span>
<span style="left:242.3px"><span class="sx" style="transform:scaleX(1.115)">50-107632</span></span>
<span style="left:351.5px"><span class="sx" style="transform:scaleX(1.115)">1</span></span>
<span style="left:389.3px"><span class="sx" style="transform:scaleX(1.115)">11:30</span></span>
<span style="left:535.5px"><span class="sx" style="transform:scaleX(1.115)">1.90</span></span>
<span style="left:631.0px"><span class="sx" style="transform:scaleX(1.115)">23806.00</span></span>
<span style="left:727.3px"><span class="sx" style="transform:scaleX(1.115)">2.00</span></span>
<span style="left:816.0px"><span class="sx" style="transform:scaleX(1.115)">21599.00</span></span>
<span style="left:1021.0px"><span class="sx" style="transform:scaleX(1.115)">Yes</span></span>
<span style="left:1111.8px"><span class="sx" style="transform:scaleX(1.115)">Yes</span></span>
<div class="rb" style="left:1179px;width:24px"><i style="left:8px"></i><i style="left:12px"></i></div>
<div class="rb" style="left:1205px;width:20px"><i style="left:8px"></i></div>
</div>
<div class="row" style="top:663px;">
<span style="left:0.5px"><span class="sx" style="transform:scaleX(1.115)">50-107631</span></span>
<span style="left:111.0px"><span class="sx" style="transform:scaleX(1.115)">28-Oct-2022</span></span>
<span style="left:242.3px"><span class="sx" style="transform:scaleX(1.115)">50-107631</span></span>
<span style="left:351.5px"><span class="sx" style="transform:scaleX(1.115)">1</span></span>
<span style="left:389.3px"><span class="sx" style="transform:scaleX(1.115)">09:00</span></span>
<span style="left:535.5px"><span class="sx" style="transform:scaleX(1.115)">2.30</span></span>
<span style="left:631.0px"><span class="sx" style="transform:scaleX(1.115)">23804.10</span></span>
<span style="left:727.3px"><span class="sx" style="transform:scaleX(1.115)">2.00</span></span>
<span style="left:816.0px"><span class="sx" style="transform:scaleX(1.115)">21597.00</span></span>
<span style="left:1021.0px"><span class="sx" style="transform:scaleX(1.115)">Yes</span></span>
<span style="left:1111.8px"><span class="sx" style="transform:scaleX(1.115)">Yes</span></span>
<div class="rb" style="left:1179px;width:24px"><i style="left:8px"></i><i style="left:12px"></i></div>
<div class="rb" style="left:1205px;width:20px"><i style="left:8px"></i></div>
</div>
<div class="row" style="top:693px;">
<span style="left:0.5px"><span class="sx" style="transform:scaleX(1.115)">50-107630</span></span>
<span style="left:111.0px"><span class="sx" style="transform:scaleX(1.115)">28-Oct-2022</span></span>
<span style="left:242.3px"><span class="sx" style="transform:scaleX(1.115)">50-107630</span></span>
<span style="left:351.5px"><span class="sx" style="transform:scaleX(1.115)">1</span></span>
<span style="left:389.3px"><span class="sx" style="transform:scaleX(1.115)">04:00</span></span>
<span style="left:535.5px"><span class="sx" style="transform:scaleX(1.115)">4.90</span></span>
<span style="left:631.0px"><span class="sx" style="transform:scaleX(1.115)">23801.80</span></span>
<span style="left:727.3px"><span class="sx" style="transform:scaleX(1.115)">4.00</span></span>
<span style="left:816.0px"><span class="sx" style="transform:scaleX(1.115)">21595.00</span></span>
<span style="left:1021.0px"><span class="sx" style="transform:scaleX(1.115)">Yes</span></span>
<span style="left:1111.8px"><span class="sx" style="transform:scaleX(1.115)">Yes</span></span>
<div class="rb" style="left:1179px;width:24px"><i style="left:8px"></i><i style="left:12px"></i></div>
<div class="rb" style="left:1205px;width:20px"><i style="left:8px"></i></div>
</div>
<div class="row" style="top:723px;">
<span style="left:0.5px"><span class="sx" style="transform:scaleX(1.115)">50-107628</span></span>
<span style="left:111.0px"><span class="sx" style="transform:scaleX(1.115)">26-Oct-2022</span></span>
<span style="left:242.3px"><span class="sx" style="transform:scaleX(1.115)">50-107628</span></span>
<span style="left:351.5px"><span class="sx" style="transform:scaleX(1.115)">1</span></span>
<span style="left:389.3px"><span class="sx" style="transform:scaleX(1.115)">04:00</span></span>
<span style="left:535.5px"><span class="sx" style="transform:scaleX(1.115)">1.70</span></span>
<span style="left:631.0px"><span class="sx" style="transform:scaleX(1.115)">23796.90</span></span>
<span style="left:727.3px"><span class="sx" style="transform:scaleX(1.115)">2.00</span></span>
<span style="left:816.0px"><span class="sx" style="transform:scaleX(1.115)">21591.00</span></span>
<span style="left:1021.0px"><span class="sx" style="transform:scaleX(1.115)">Yes</span></span>
<span style="left:1111.8px"><span class="sx" style="transform:scaleX(1.115)">Yes</span></span>
<div class="rb" style="left:1179px;width:24px"><i style="left:8px"></i><i style="left:12px"></i></div>
<div class="rb" style="left:1205px;width:20px"><i style="left:8px"></i></div>
</div>
<div class="row" style="top:753px;">
<span style="left:0.5px"><span class="sx" style="transform:scaleX(1.115)">50-107626</span></span>
<span style="left:111.0px"><span class="sx" style="transform:scaleX(1.115)">24-Oct-2022</span></span>
<span style="left:242.3px"><span class="sx" style="transform:scaleX(1.115)">50-107626</span></span>
<span style="left:351.5px"><span class="sx" style="transform:scaleX(1.115)">1</span></span>
<span style="left:389.3px"><span class="sx" style="transform:scaleX(1.115)">04:00</span></span>
<span style="left:535.5px"><span class="sx" style="transform:scaleX(1.115)">8.00</span></span>
<span style="left:631.0px"><span class="sx" style="transform:scaleX(1.115)">23795.20</span></span>
<span style="left:727.3px"><span class="sx" style="transform:scaleX(1.115)">3.00</span></span>
<span style="left:816.0px"><span class="sx" style="transform:scaleX(1.115)">21589.00</span></span>
<span style="left:1021.0px"><span class="sx" style="transform:scaleX(1.115)">Yes</span></span>
<span style="left:1111.8px"><span class="sx" style="transform:scaleX(1.115)">Yes</span></span>
<div class="rb" style="left:1179px;width:24px"><i style="left:8px"></i><i style="left:12px"></i></div>
<div class="rb" style="left:1205px;width:20px"><i style="left:8px"></i></div>
</div>
<div class="row" style="top:783px;">
<span style="left:0.5px"><span class="sx" style="transform:scaleX(1.115)">50-107625</span></span>
<span style="left:111.0px"><span class="sx" style="transform:scaleX(1.115)">20-Oct-2022</span></span>
<span style="left:242.3px"><span class="sx" style="transform:scaleX(1.115)">50-107625</span></span>
<span style="left:351.5px"><span class="sx" style="transform:scaleX(1.115)">1</span></span>
<span style="left:389.3px"><span class="sx" style="transform:scaleX(1.115)">04:00</span></span>
<span style="left:535.5px"><span class="sx" style="transform:scaleX(1.115)">3.40</span></span>
<span style="left:631.0px"><span class="sx" style="transform:scaleX(1.115)">23787.20</span></span>
<span style="left:727.3px"><span class="sx" style="transform:scaleX(1.115)">1.00</span></span>
<span style="left:816.0px"><span class="sx" style="transform:scaleX(1.115)">21586.00</span></span>
<span style="left:1021.0px"><span class="sx" style="transform:scaleX(1.115)">Yes</span></span>
<span style="left:1111.8px"><span class="sx" style="transform:scaleX(1.115)">Yes</span></span>
<div class="rb" style="left:1179px;width:24px"><i style="left:8px"></i><i style="left:12px"></i></div>
<div class="rb" style="left:1205px;width:20px"><i style="left:8px"></i></div>
</div>
<div class="a" style="left:90px;top:867px;width:1245px;height:65px;background:#dcdcdc"></div>
<div class="t" style="left:100px;top:881px;line-height:13px"><span class="sx" style="transform:scaleX(1.105)"><b>Viewing:</b> Log Sheet Entries<br><b>Filtered By:</b><br><b>Sorted By:</b> Time Up, Log Date (descending)</span></div>
<div class="gbtn" style="left:1158px;top:873px;width:82px;height:25px;line-height:24.500px;color:#333"><span class="sx sc">Add Log</span></div>
<div class="gbtn" style="left:1242px;top:873px;width:82px;height:25px;line-height:24.500px;color:#333"><span class="sx sc">Sort</span></div>
<div class="gbtn" style="left:1158px;top:901.4px;width:82px;height:25px;line-height:24.500px;color:#333"><span class="sx sc">Filter</span></div>
<div class="gbtn" style="left:1242px;top:901.4px;width:82px;height:25px;line-height:24.500px;color:#333"><span class="sx sc">Print</span></div>
<div class="gbtn" style="left:1048px;top:901.4px;width:105px;height:25px;line-height:24.500px;color:#333"><span class="sx sc">Reset STT Totals</span></div>
<div class="a" style="left:1335px;top:163px;width:585px;height:769px;background:#808080"></div>
<div class="a" style="left:1335px;top:163px;width:583px;height:599px;background:#cccccc"></div>
<div class="t" style="left:1347px;top:168.500px"><span class="sx">Log Sheet details</span></div>
<div class="pb" style="left:1815px;top:166px;width:100px;height:19px;line-height:18.500px"><span class="sx sc">History</span></div>
<div class="t" style="left:1347px;top:190.500px;font-size:17px;line-height:22px;color:#222"><span class="sx" style="transform:scaleX(1.13)">Time Input:</span></div>
<div class="a" style="left:1453.5px;top:194.0px;width:13px;height:13px;border-radius:50%;background:#fff;border:1px solid #6e6e6e"></div>
<div class="t" style="left:1470px;top:195.500px"><span class="sx">Minutes</span></div>
<div class="a" style="left:1516.5px;top:194.0px;width:13px;height:13px;border-radius:50%;background:#fff;border:1.500px solid #0a64e6"></div><div class="a" style="left:1519.5px;top:197.0px;width:7px;height:7px;border-radius:50%;background:#0a64e6"></div>
<div class="t" style="left:1532.500px;top:195.500px"><span class="sx">Hours</span></div>
<div class="a" style="left:1569.0px;top:194.0px;width:13px;height:13px;border-radius:50%;background:#d6d6d6;border:1px solid #c2c2c2"></div>
<div class="t" style="left:1585px;top:195.500px"><span class="sx">Time Input</span></div>
<div class="fl" style="left:1307px;top:219px;width:130px"><span class="sx sr">Log No:</span></div>
<div class="fi" style="left:1439px;top:219px;width:175px;border:2px solid #101010;border-radius:4px;line-height:23.500px;padding-left:4px;height:25px;top:219px"><span class="sx">47-86653</span></div>
<div class="fl" style="left:1307px;top:247px;width:130px"><span class="sx sr">Flight Number:</span></div>
<div class="fi" style="left:1439px;top:247px;width:175px;"><span class="sx">123</span></div>
<div class="fl" style="left:1307px;top:275px;width:130px"><span class="sx sr">Origin:</span></div>
<div class="fi" style="left:1439px;top:275px;width:59.5px;"><span class="sx">EFG</span></div>
<div class="fi d" style="left:1499.5px;top:275px;width:114px;"><span class="sx">unknown</span></div>
<div class="fl" style="left:1307px;top:303px;width:130px"><span class="sx sr">Up (UTC):</span></div>
<div class="fi" style="left:1439px;top:303px;width:59.5px;"><span class="sx">12:00</span></div>
<div class="fi" style="left:1499.5px;top:303px;width:114px;"><span class="sx">14-Nov-2022</span></div>
<div class="fl" style="left:1307px;top:331px;width:130px"><span class="sx sr">Flight Hrs:</span></div>
<div class="fi" style="left:1439px;top:331px;width:175px;"><span class="sx">1.00</span></div>
<div class="fl" style="left:1307px;top:359px;width:130px"><span class="sx sr">HSN:</span></div>
<div class="fi d" style="left:1439px;top:359px;width:175px;"><span class="sx" style="transform:scaleX(1.15)">Old: 23841.60 New: 23842.60</span></div>
<div class="fl" style="left:1307px;top:387px;width:130px"><span class="sx sr">Accept:</span></div>
<div class="a" style="left:1446px;top:393px;width:13px;height:13px;background:#fff;border:1px solid #767676;border-radius:2.500px"></div>
<div class="t" style="left:1546px;top:392.500px"><span class="sx">Posted:</span></div>
<div class="a" style="left:1594px;top:393px;width:13px;height:13px;background:#e4e4e4;border:1px solid #d6d6d6;border-radius:2.500px"></div>
<div class="fl" style="left:1307px;top:415px;width:130px"><span class="sx sr">Created by:</span></div>
<div class="fi d" style="left:1439px;top:415px;width:175px;"><span class="sx">AISAdmin on 10-Jul-2023</span></div>
<div class="fl" style="left:1571px;top:219px;width:130px"><span class="sx sr">Date:</span></div>
<div class="fi" style="left:1703px;top:219px;width:175px;"><span class="sx">14-Nov-2022</span></div>
<div class="fl" style="left:1571px;top:247px;width:130px"><span class="sx sr">Leg #:</span></div>
<div class="fi" style="left:1703px;top:247px;width:175px;"><span class="sx">1</span></div>
<div class="fl" style="left:1571px;top:275px;width:130px"><span class="sx sr">Dest:</span></div>
<div class="fi" style="left:1703px;top:275px;width:59.5px;"><span class="sx">DEF</span></div>
<div class="fi d" style="left:1763.5px;top:275px;width:114px;"><span class="sx">unknown</span></div>
<div class="fl" style="left:1571px;top:303px;width:130px"><span class="sx sr">Down (UTC):</span></div>
<div class="fi d" style="left:1703px;top:303px;width:59.5px;"><span class="sx">13:00</span></div>
<div class="fi" style="left:1763.5px;top:303px;width:114px;"><span class="sx">14-Nov-2022</span></div>
<div class="fl" style="left:1571px;top:331px;width:130px"><span class="sx sr">Cycles:</span></div>
<div class="fi" style="left:1703px;top:331px;width:175px;"><span class="sx">1.00</span></div>
<div class="fl" style="left:1571px;top:359px;width:130px"><span class="sx sr">LSN:</span></div>
<div class="fi d" style="left:1703px;top:359px;width:175px;"><span class="sx" style="transform:scaleX(1.15)">Old: 21630.00 New: 21631.00</span></div>
<div class="fl" style="left:1571px;top:387px;width:130px"><span class="sx sr">Fuel Lift:</span></div>
<div class="fi" style="left:1703px;top:387px;width:99px;"><span class="sx">0.000</span></div>
<div class="fi" style="left:1803.500px;top:388px;width:74px;height:23px;line-height:22px;padding-left:9px;border-radius:3px"><span class="sx">Liters</span></div><svg class="a" style="left:1861px;top:396px" width="11" height="8" viewBox="0 0 11 8"><path d="M1 1.500l4.500 4.500L10 1.500" fill="none" stroke="#111" stroke-width="2"/></svg>
<div class="fl" style="left:1571px;top:415px;width:130px"><span class="sx sr">Last Modified:</span></div>
<div class="fi d" style="left:1703px;top:415px;width:175px;"></div>
<div class="a" style="left:1365px;top:445px;width:213px;height:22px;background:#d2d2d2"></div>
<div class="fl" style="left:1307px;top:442.500px;width:130px"><span class="sx sr">Starts118B:</span></div>
<div class="a" style="left:1439.500px;top:445px;width:99px;height:22px;background:#fff;line-height:22px;padding-left:6px;font-size:13px">1</div>
<div class="t" style="left:1545px;top:450px"><span class="sx">Tot: 2</span></div>
<div class="a" style="left:1347px;top:487.500px;width:556px;height:171px;background:#cccccc;border:1px solid #f4f4f4"></div>
<div class="a" style="left:1348px;top:489px;width:277px;height:15px;background:#cccccc;border-right:1.500px solid #24483e;line-height:17px;text-align:center"><span class="sx sc">Accessories</span></div>
<div class="a" style="left:1626px;top:488px;width:276px;height:16px;background:#cccccc;line-height:17.500px;text-align:center;border-bottom:1px solid #f4f4f4"><span class="sx sc">Discrepancies</span></div>
<div class="a" style="left:1348px;top:504.500px;width:548px;height:1.500px;background:#9a9a9a"></div>
<div class="a" style="left:1349px;top:506px;width:547px;height:151px;background:#eeeeee;border-left:1.500px solid #8c8c8c;overflow:hidden"></div>
<div class="a" style="left:1351px;top:506px;width:525px;height:20.500px;background:#c4cfd8;border-bottom:1.500px solid #111;line-height:20.500px">
<span class="t" style="left:36.0px;top:-0.500px"><span class="sx">Fluids</span></span>
<span class="t" style="left:136.0px;top:-0.500px"><span class="sx">Hrs</span></span>
<span class="t" style="left:179.0px;top:-0.500px"><span class="sx">Cyc</span></span>
<span class="t" style="left:253.0px;top:-0.500px"><span class="sx">Item/Assy</span></span>
</div>
<div class="pb" style="left:1351.500px;top:507px;width:35px;height:18px;line-height:17px;background:#f4f4f4"><span class="sx sc">Add</span></div>
<div class="a" style="left:1900.500px;top:506px;width:1.500px;height:152px;background:#2f5548"></div>
<div class="a" style="left:1896px;top:506px;width:4.500px;height:152px;background:#c8c8c8"></div><div class="a" style="left:1876px;top:506px;width:20px;height:151px;background:#f1f1f1;border-left:1px solid #fafafa"></div>
<div class="a" style="left:1879px;top:523px;width:13px;height:82.500px;background:#c1c1c1"></div>
<svg class="a" style="left:1881.500px;top:512.500px" width="8" height="5" viewBox="0 0 8 5"><path d="M0 4.500L4 0.500 8 4.500z" fill="#a3a3a3"/></svg>
<svg class="a" style="left:1881.500px;top:644.500px" width="8" height="5" viewBox="0 0 8 5"><path d="M0 0.500L4 4.500 8 0.500z" fill="#505050"/></svg>
<div class="a" style="left:1351px;top:526.500px;width:526px;height:130.500px;overflow:hidden">
<div class="gr" style="left:0;top:0px">
<i class="vb" style="left:36px"></i>
<i class="vb" style="left:136px"></i>
<i class="vb" style="left:179px"></i>
<i class="vb" style="left:222px"></i>
<i class="vb" style="left:253px"></i>
<i class="vb" style="left:520.5px"></i>
<div class="ib" style="left:0px;top:4.500px"><svg style="position:absolute;left:0;top:0" width="13" height="13" viewBox="0 0 13 13"><path d="M1.300 11.900l.9-3.200L9 1.900a.9.9 0 0 1 1.300 0l1 1a.9.9 0 0 1 0 1.300L4.500 11z" fill="#fff" stroke="#262626" stroke-width="1.250" stroke-linejoin="round"/><path d="M6.900 4l2.300 2.300 1.600-1.600-2.300-2.300z" fill="#262626"/><path d="M1.300 11.900l.7-2.300 1.600 1.600z" fill="#262626"/></svg></div><div class="ib" style="left:19px;top:4.500px"><svg style="position:absolute;left:0;top:0" width="13" height="13" viewBox="0 0 13 13"><path d="M1.800 1.800l9.400 9.400M11.200 1.800L1.800 11.200" stroke="#1c1c1c" stroke-width="1.700"/></svg></div>
<span style="left:137px;top:6.500px;color:#ff8c00"><span class="sx">1.000</span></span>
<span style="left:180px;top:6.500px;color:#ff8c00"><span class="sx">1.000</span></span>
<span style="left:223px;top:6.500px"><span class="sx">Cyc</span></span>
<span class="lnk" style="left:254px;top:1px"><span class="sx" style="transform:scaleX(1.113)">05-00-00 100 Cycle Inspection Grouping - 100<br>Cycle Inspection Grouping - C-FSUA - Pos:</span></span>
</div>
<div class="gr" style="left:0;top:27px">
<i class="vb" style="left:36px"></i>
<i class="vb" style="left:136px"></i>
<i class="vb" style="left:179px"></i>
<i class="vb" style="left:222px"></i>
<i class="vb" style="left:253px"></i>
<i class="vb" style="left:520.5px"></i>
<div class="ib" style="left:0px;top:4.500px"><svg style="position:absolute;left:0;top:0" width="13" height="13" viewBox="0 0 13 13"><path d="M1.300 11.900l.9-3.200L9 1.900a.9.9 0 0 1 1.300 0l1 1a.9.9 0 0 1 0 1.300L4.500 11z" fill="#fff" stroke="#262626" stroke-width="1.250" stroke-linejoin="round"/><path d="M6.900 4l2.300 2.300 1.600-1.600-2.300-2.300z" fill="#262626"/><path d="M1.300 11.900l.7-2.300 1.600 1.600z" fill="#262626"/></svg></div><div class="ib" style="left:19px;top:4.500px"><svg style="position:absolute;left:0;top:0" width="13" height="13" viewBox="0 0 13 13"><path d="M1.800 1.800l9.400 9.400M11.200 1.800L1.800 11.200" stroke="#1c1c1c" stroke-width="1.700"/></svg></div>
<span style="left:137px;top:6.500px;"><span class="sx">N/A</span></span>
<span style="left:180px;top:6.500px;"><span class="sx">N/A</span></span>
<span style="left:223px;top:6.500px"><span class="sx">Cyc</span></span>
<span class="lnk" style="left:254px;top:1px"><span class="sx" style="transform:scaleX(1.113)">05-00-00 100 HR Inspection Grouping - 100 HR<br>Inspection Grouping - C-FSUA - Pos:</span></span>
</div>
<div class="gr" style="left:0;top:54px">
<i class="vb" style="left:36px"></i>
<i class="vb" style="left:136px"></i>
<i class="vb" style="left:179px"></i>
<i class="vb" style="left:222px"></i>
<i class="vb" style="left:253px"></i>
<i class="vb" style="left:520.5px"></i>
<div class="ib" style="left:0px;top:4.500px"><svg style="position:absolute;left:0;top:0" width="13" height="13" viewBox="0 0 13 13"><path d="M1.300 11.900l.9-3.200L9 1.900a.9.9 0 0 1 1.300 0l1 1a.9.9 0 0 1 0 1.300L4.500 11z" fill="#fff" stroke="#262626" stroke-width="1.250" stroke-linejoin="round"/><path d="M6.900 4l2.300 2.300 1.600-1.600-2.300-2.300z" fill="#262626"/><path d="M1.300 11.900l.7-2.300 1.600 1.600z" fill="#262626"/></svg></div><div class="ib" style="left:19px;top:4.500px"><svg style="position:absolute;left:0;top:0" width="13" height="13" viewBox="0 0 13 13"><path d="M1.800 1.800l9.400 9.400M11.200 1.800L1.800 11.200" stroke="#1c1c1c" stroke-width="1.700"/></svg></div>
<span style="left:37px;top:6.500px"><span class="sx">0.000 Quarts</span></span>
<span style="left:137px;top:6.500px;color:#ff8c00"><span class="sx">0.500</span></span>
<span style="left:180px;top:6.500px;color:#ff8c00"><span class="sx">1.500</span></span>
<span style="left:223px;top:6.500px"><span class="sx">Cyc</span></span>
<span class="lnk" style="left:254px;top:1px"><span class="sx" style="transform:scaleX(1.113)">49-10-00 APU APS1000 - 4501690A - SP-<br>E967490 - Pos:APU</span></span>
</div>
<div class="gr" style="left:0;top:81px">
<i class="vb" style="left:36px"></i>
<i class="vb" style="left:136px"></i>
<i class="vb" style="left:179px"></i>
<i class="vb" style="left:222px"></i>
<i class="vb" style="left:253px"></i>
<i class="vb" style="left:520.5px"></i>
<div class="ib" style="left:0px;top:4.500px"><svg style="position:absolute;left:0;top:0" width="13" height="13" viewBox="0 0 13 13"><path d="M1.300 11.900l.9-3.200L9 1.900a.9.9 0 0 1 1.300 0l1 1a.9.9 0 0 1 0 1.300L4.500 11z" fill="#fff" stroke="#262626" stroke-width="1.250" stroke-linejoin="round"/><path d="M6.900 4l2.300 2.300 1.600-1.600-2.300-2.300z" fill="#262626"/><path d="M1.300 11.900l.7-2.300 1.600 1.600z" fill="#262626"/></svg></div><div class="ib" style="left:19px;top:4.500px"><svg style="position:absolute;left:0;top:0" width="13" height="13" viewBox="0 0 13 13"><path d="M1.800 1.800l9.400 9.400M11.200 1.800L1.800 11.200" stroke="#1c1c1c" stroke-width="1.700"/></svg></div>
<span style="left:37px;top:6.500px"><span class="sx">0.000 Quarts</span></span>
<span style="left:137px;top:6.500px;"><span class="sx">N/A</span></span>
<span style="left:180px;top:6.500px;"><span class="sx">N/A</span></span>
<span style="left:223px;top:6.500px"><span class="sx">Cyc</span></span>
<span class="lnk" style="left:254px;top:1px"><span class="sx" style="transform:scaleX(1.113)">72-00-00 LF507-1F Turbine Engine - 2-003-040-<br>15 - LF07402 - Pos:ENG 2</span></span>
</div>
<div class="gr" style="left:0;top:108px">
<i class="vb" style="left:36px"></i>
<i class="vb" style="left:136px"></i>
<i class="vb" style="left:179px"></i>
<i class="vb" style="left:222px"></i>
<i class="vb" style="left:253px"></i>
<i class="vb" style="left:520.5px"></i>
<div class="ib" style="left:0px;top:4.500px"><svg style="position:absolute;left:0;top:0" width="13" height="13" viewBox="0 0 13 13"><path d="M1.300 11.900l.9-3.200L9 1.900a.9.9 0 0 1 1.300 0l1 1a.9.9 0 0 1 0 1.300L4.500 11z" fill="#fff" stroke="#262626" stroke-width="1.250" stroke-linejoin="round"/><path d="M6.900 4l2.300 2.300 1.600-1.600-2.300-2.300z" fill="#262626"/><path d="M1.300 11.900l.7-2.300 1.600 1.600z" fill="#262626"/></svg></div><div class="ib" style="left:19px;top:4.500px"><svg style="position:absolute;left:0;top:0" width="13" height="13" viewBox="0 0 13 13"><path d="M1.800 1.800l9.400 9.400M11.200 1.800L1.800 11.200" stroke="#1c1c1c" stroke-width="1.700"/></svg></div>
<span style="left:37px;top:6.500px"><span class="sx">0.000 Quarts</span></span>
<span style="left:137px;top:6.500px;"><span class="sx">N/A</span></span>
<span style="left:180px;top:6.500px;"><span class="sx">N/A</span></span>
<span style="left:223px;top:6.500px"><span class="sx">Cyc</span></span>
<span class="lnk" style="left:254px;top:1px"><span class="sx" style="transform:scaleX(1.113)">72-00-00 LF507-1F Turbine Engine - 2-003-040-<br>15 - LF07401 - Pos:ENG 1</span></span>
</div>
</div>
<div class="a" style="left:1348px;top:657px;width:554px;height:1px;background:#2f5548"></div>
<div class="a" style="left:1560px;top:612px;width:218px;height:23px;background:#202124;color:#f1f1f1;line-height:24.500px;padding-left:7px;white-space:nowrap;font-size:12px;letter-spacing:-0.100px">Hours = [Hours]*0.5 Cyc = [Cycles]*1.5</div>
<div class="pb" style="left:1657.500px;top:661.500px;width:119.500px;height:18.500px;line-height:17.500px"><span class="sx sc">Save Changes</span></div>
<div class="pb" style="left:1783px;top:661.500px;width:120px;height:18.500px;line-height:17.500px"><span class="sx sc">Discard Log</span></div>
<div class="t" style="left:1350px;top:696px;line-height:13px;color:#1a1a1a"><span class="sx" style="transform:scaleX(1.115)">The input method (per Leg or per Log) as well as the default fluid consumption unit can be set in the<br>company settings.<br>Checking the "Accept" checkbox and saving the log will cause an automated post to TMI within a<br>minute. No changes can be made after accepting the log.</span></div>
<svg class="a" style="left:89px;top:299px" width="6" height="12" viewBox="0 0 6 12"><path d="M0 0l5 6-5 6z" fill="#8c0020"/></svg>
<div class="redbox" style="left:87px;top:1px;width:279px;height:43px"></div>
<div class="redbox" style="left:116px;top:41px;width:1069px;height:88.500px"></div>
<div class="redbox" style="left:862px;top:132.500px;width:322.500px;height:26.500px"></div>
<div class="redbox" style="left:1268px;top:213px;width:29px;height:30px;border-width:4px"></div>
<div class="redbox" style="left:1361px;top:441px;width:221px;height:30px"></div>
<div class="redbox" style="left:1342px;top:483px;width:566px;height:204px"></div>
<div class="redbox" style="left:1044px;top:898.500px;width:113px;height:30.500px"></div>
<div class="circ" style="left:66.0px;top:44.0px">1</div>
<div class="circ" style="left:1191.0px;top:71.0px">2</div>
<div class="circ" style="left:1193.0px;top:132.2px">3</div>
<div class="circ" style="left:1233.0px;top:213.0px">4</div>
<div class="circ" style="left:1335.0px;top:410.0px">5</div>
<div class="circ" style="left:1794.0px;top:450.0px">6</div>
<div class="circ" style="left:1083.0px;top:863.0px">7</div>
<div class="a" style="left:0;top:932px;width:1920px;height:1px;background:#2f5a45"></div>
</body></html>
